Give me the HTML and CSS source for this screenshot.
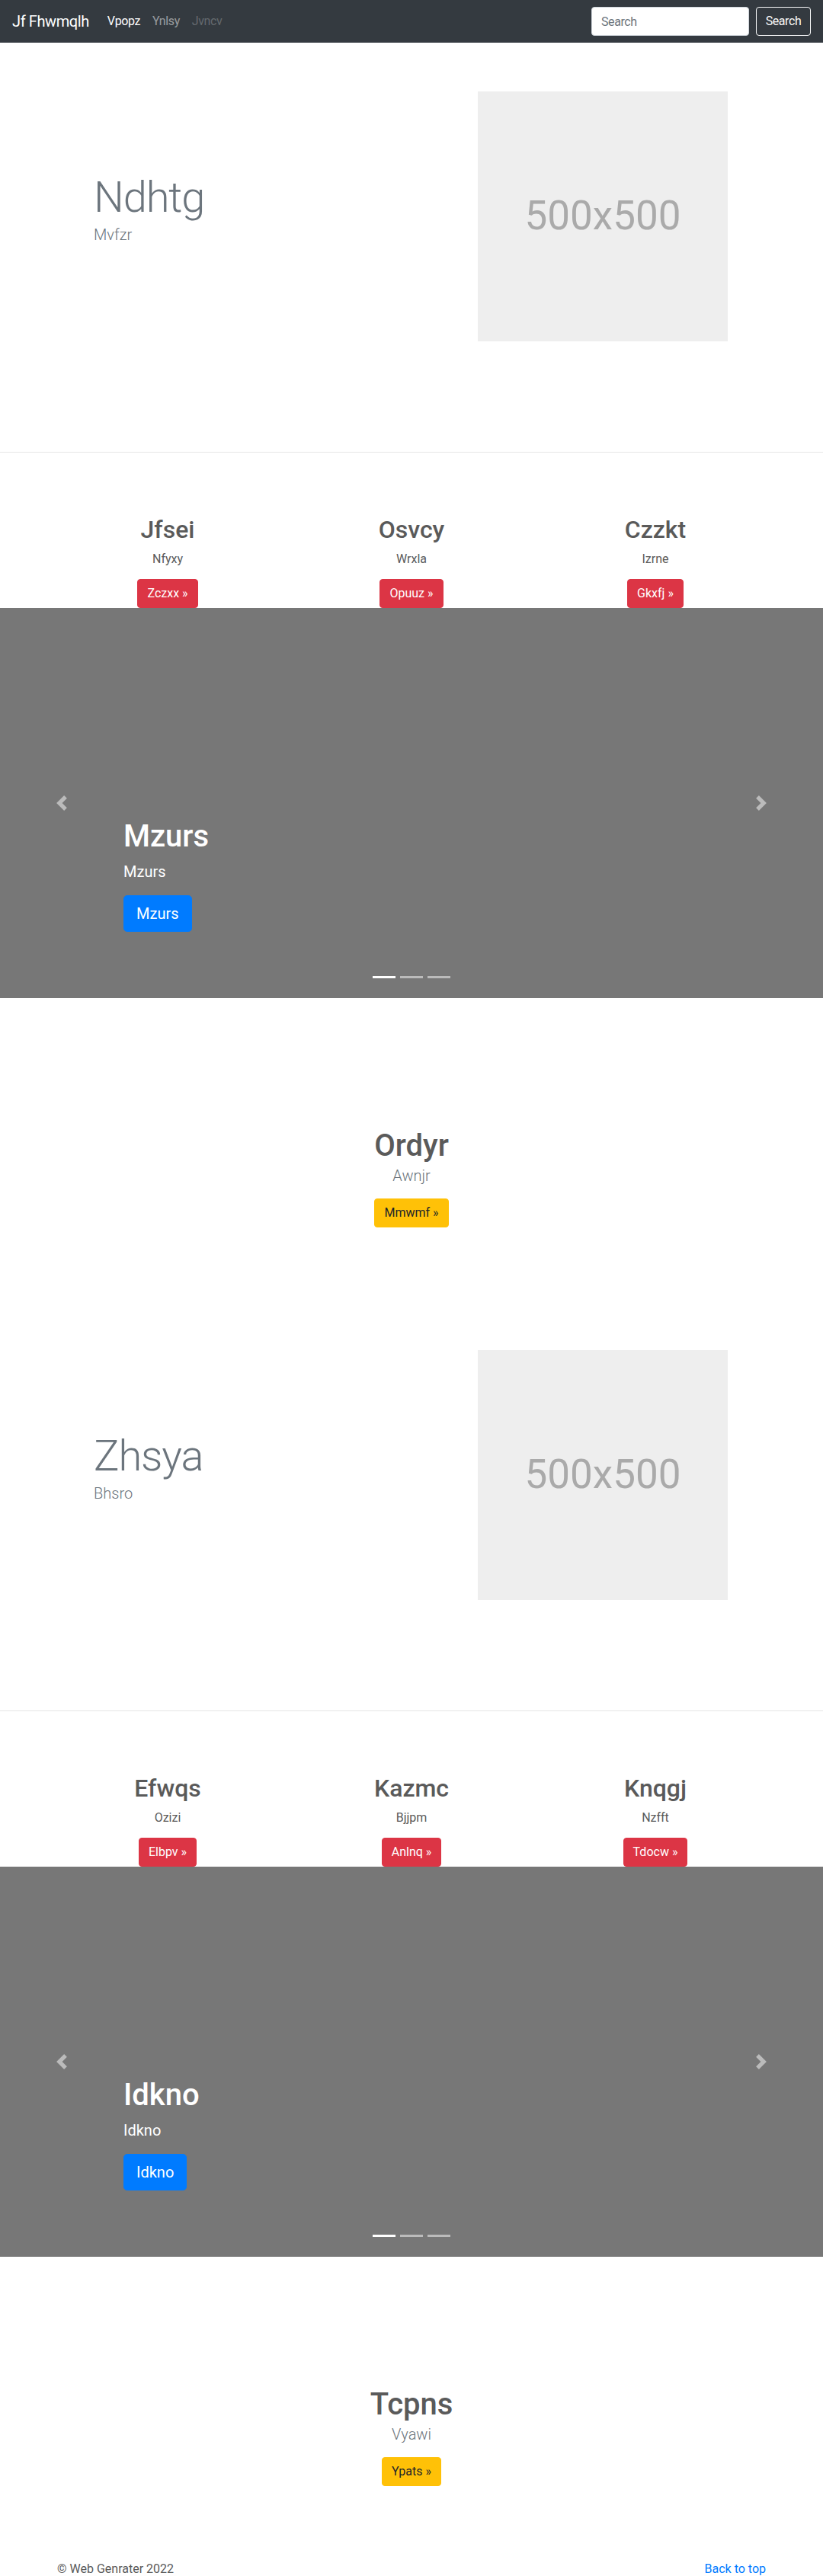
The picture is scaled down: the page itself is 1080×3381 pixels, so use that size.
FILE: index.html
```html
<!DOCTYPE html>
<html lang="en">
<head>
<meta charset="utf-8">
<title>Jf Fhwmqlh</title>
<link rel="stylesheet" href="styles.css">
</head>
<body>
<nav class="navbar">
  <a class="brand" href="#">Jf Fhwmqlh</a>
  <ul class="nav">
    <li><a class="nav-link active" href="#">Vpopz</a></li>
    <li><a class="nav-link" href="#">Ynlsy</a></li>
    <li><a class="nav-link disabled" href="#">Jvncv</a></li>
  </ul>
  <form class="search">
    <input class="search-input" type="text" placeholder="Search">
    <button class="search-btn" type="button">Search</button>
  </form>
</nav>

<section class="hero">
  <div class="container hero-row">
    <div class="hero-text">
      <h1 class="display">Ndhtg</h1>
      <p class="lead">Mvfzr</p>
    </div>
    <div class="hero-media">
      <div class="placeholder">500x500</div>
    </div>
  </div>
</section>

<section class="marketing">
  <div class="cols">
    <div class="col">
      <h2>Jfsei</h2>
      <p>Nfyxy</p>
      <p class="btn-wrap"><a class="btn btn-danger" href="#">Zczxx »</a></p>
    </div>
    <div class="col">
      <h2>Osvcy</h2>
      <p>Wrxla</p>
      <p class="btn-wrap"><a class="btn btn-danger" href="#">Opuuz »</a></p>
    </div>
    <div class="col">
      <h2>Czzkt</h2>
      <p>Izrne</p>
      <p class="btn-wrap"><a class="btn btn-danger" href="#">Gkxfj »</a></p>
    </div>
  </div>
</section>

<section class="carousel">
  <a class="ctrl ctrl-prev" href="#"><svg viewBox="0 0 8 8" width="20" height="20"><path d="M5.25 0l-4 4 4 4 1.5-1.5L4.25 4l2.5-2.5L5.25 0z"/></svg></a>
  <a class="ctrl ctrl-next" href="#"><svg viewBox="0 0 8 8" width="20" height="20"><path d="M2.75 0l-1.5 1.5L3.75 4l-2.5 2.5L2.75 8l4-4-4-4z"/></svg></a>
  <div class="caption">
    <h1>Mzurs</h1>
    <p>Mzurs</p>
    <p class="caption-btn"><a class="btn btn-lg btn-primary" href="#">Mzurs</a></p>
  </div>
  <div class="indicators"><span class="active"></span><span></span><span></span></div>
</section>

<section class="feature">
  <h1>Ordyr</h1>
  <p class="lead">Awnjr</p>
  <p class="btn-wrap"><a class="btn btn-warning" href="#">Mmwmf »</a></p>
</section>

<section class="hero">
  <div class="container hero-row">
    <div class="hero-text">
      <h1 class="display">Zhsya</h1>
      <p class="lead">Bhsro</p>
    </div>
    <div class="hero-media">
      <div class="placeholder">500x500</div>
    </div>
  </div>
</section>

<section class="marketing">
  <div class="cols">
    <div class="col">
      <h2>Efwqs</h2>
      <p>Ozizi</p>
      <p class="btn-wrap"><a class="btn btn-danger" href="#">Elbpv »</a></p>
    </div>
    <div class="col">
      <h2>Kazmc</h2>
      <p>Bjjpm</p>
      <p class="btn-wrap"><a class="btn btn-danger" href="#">Anlnq »</a></p>
    </div>
    <div class="col">
      <h2>Knqgj</h2>
      <p>Nzfft</p>
      <p class="btn-wrap"><a class="btn btn-danger" href="#">Tdocw »</a></p>
    </div>
  </div>
</section>

<section class="carousel">
  <a class="ctrl ctrl-prev" href="#"><svg viewBox="0 0 8 8" width="20" height="20"><path d="M5.25 0l-4 4 4 4 1.5-1.5L4.25 4l2.5-2.5L5.25 0z"/></svg></a>
  <a class="ctrl ctrl-next" href="#"><svg viewBox="0 0 8 8" width="20" height="20"><path d="M2.75 0l-1.5 1.5L3.75 4l-2.5 2.5L2.75 8l4-4-4-4z"/></svg></a>
  <div class="caption">
    <h1>Idkno</h1>
    <p>Idkno</p>
    <p class="caption-btn"><a class="btn btn-lg btn-primary" href="#">Idkno</a></p>
  </div>
  <div class="indicators"><span class="active"></span><span></span><span></span></div>
</section>

<section class="feature">
  <h1>Tcpns</h1>
  <p class="lead">Vyawi</p>
  <p class="btn-wrap"><a class="btn btn-warning" href="#">Ypats »</a></p>
</section>

<footer class="container footer">
  <p>© Web Genrater 2022</p>
  <p><a class="back" href="#">Back to top</a></p>
</footer>
</body>
</html>
```

FILE: styles.css
```css
* { box-sizing: border-box; }

body {
  margin: 0;
  font-family: Roboto, "Liberation Sans", Arial, sans-serif;
  font-size: 16px;
  line-height: 1.5;
  color: #5a5a5a;
  background: #fff;
}

a { text-decoration: none; }

/* navbar */
.navbar {
  height: 56px;
  background: #343a40;
  padding: 0 16px;
  display: flex;
  align-items: center;
  letter-spacing: -0.025em;
}
.brand {
  color: #fff;
  font-size: 20px;
  line-height: 30px;
  margin-right: 16px;
}
.nav {
  display: flex;
  list-style: none;
  margin: 0;
  padding: 0;
}
.nav-link {
  display: block;
  padding: 0 8px;
  color: rgba(255, 255, 255, 0.5);
}
.nav-link.active { color: #fff; }
.nav-link.disabled { color: rgba(255, 255, 255, 0.25); }

.search {
  margin: 0 0 0 auto;
  display: flex;
  align-items: center;
}
.search-input {
  width: 207px;
  height: 38px;
  margin-right: 9px;
  padding: 6px 12px;
  font: inherit;
  letter-spacing: inherit;
  color: #495057;
  background: #fff;
  border: 1px solid #ced4da;
  border-radius: 4px;
}
.search-input::placeholder { color: #6c757d; }
.search-btn {
  width: 72px;
  height: 38px;
  padding: 6px 10px;
  font: inherit;
  letter-spacing: inherit;
  color: #f8f9fa;
  background: transparent;
  border: 1px solid #f8f9fa;
  border-radius: 4px;
}

/* hero */
.container {
  width: 960px;
  margin: 0 auto;
  padding: 0 15px;
}
.hero {
  padding: 64px 0 145px;
  border-bottom: 1px solid #e5e5e5;
}
.hero-row { display: flex; }
.hero-text {
  flex: 0 0 465px;
  padding: 106px 0 0 48px;
}
.hero-media {
  flex: 1;
  padding-left: 87px;
}
.display {
  margin: 0;
  font-size: 56px;
  font-weight: 300;
  line-height: 67px;
  letter-spacing: -0.02em;
  color: #6c757d;
}
.lead {
  margin: 0;
  font-size: 20px;
  font-weight: 300;
  line-height: 30px;
  color: #6c757d;
}
.placeholder {
  width: 328px;
  height: 328px;
  background: #eee;
  color: #aaa;
  font-size: 53px;
  display: flex;
  align-items: center;
  justify-content: center;
}

/* marketing */
.marketing { padding-top: 82px; }
.cols {
  width: 960px;
  margin: 0 auto;
  display: grid;
  grid-template-columns: repeat(3, 1fr);
  text-align: center;
}
.col h2 {
  margin: 0 0 8px;
  font-size: 32px;
  font-weight: 500;
  line-height: 38px;
}
.col p { margin: 0 0 14px; }
.col p.btn-wrap { margin: 0; }

.btn {
  display: inline-block;
  padding: 6px 12px;
  font-size: 16px;
  line-height: 24px;
  border: 1px solid transparent;
  border-radius: 4px;
}
.btn-danger { background: #dc3545; border-color: #dc3545; color: #fff; }
.btn-warning { background: #ffc107; border-color: #ffc107; color: #212529; }
.btn-primary { background: #007bff; border-color: #007bff; color: #fff; }
.btn-lg {
  padding: 8px 16px;
  font-size: 20px;
  line-height: 30px;
  border-radius: 4.8px;
}

/* carousel */
.carousel {
  position: relative;
  height: 512px;
  background: #777;
}
.ctrl {
  position: absolute;
  top: 0;
  bottom: 0;
  width: 15%;
  display: flex;
  align-items: center;
  justify-content: center;
  opacity: 0.5;
}
.ctrl svg { fill: #fff; }
.ctrl-prev { left: 0; }
.ctrl-next { right: 0; }
.caption {
  position: absolute;
  left: 15%;
  right: 15%;
  bottom: 47px;
  padding: 20px 0;
  color: #fff;
  text-align: left;
}
.caption h1 {
  margin: 0 0 8px;
  font-size: 40px;
  font-weight: 500;
  line-height: 48px;
}
.caption p {
  margin: 0 0 17px;
  font-size: 20px;
  line-height: 28px;
}
.caption p.caption-btn { margin: 0 0 20px; }
.indicators {
  position: absolute;
  left: 0;
  right: 0;
  bottom: 26px;
  display: flex;
  justify-content: center;
  gap: 6px;
}
.indicators span {
  width: 30px;
  height: 3px;
  background: #fff;
  opacity: 0.5;
}
.indicators span.active { opacity: 1; }

/* feature */
.feature {
  padding: 172px 0 97px;
  text-align: center;
}
.feature h1 {
  margin: 0 0 2px;
  font-size: 40px;
  font-weight: 500;
  line-height: 44px;
}
.feature .lead { margin-bottom: 15px; }
.feature .btn-wrap { margin: 0; }

/* footer */
.footer {
  display: flex;
  justify-content: space-between;
}
.footer p { margin: 0 0 16px; }
.back { color: #007bff; }
```
